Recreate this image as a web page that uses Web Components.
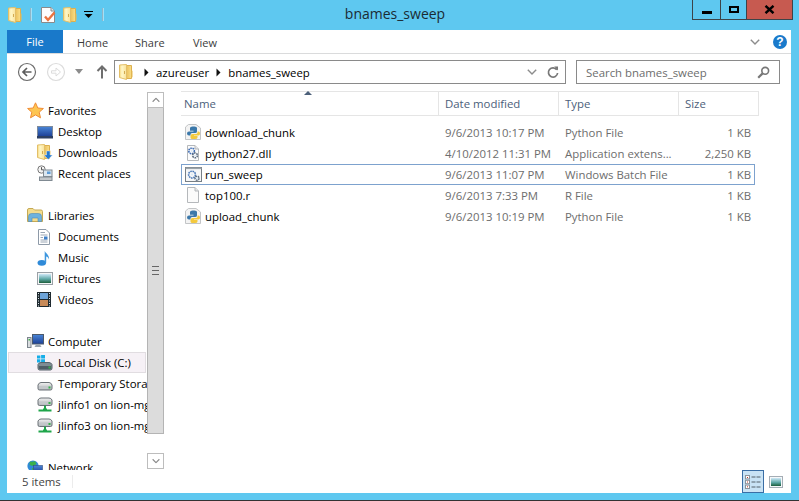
<!DOCTYPE html>
<html><head><meta charset="utf-8"><title>bnames_sweep</title>
<style>html,body{margin:0;padding:0;height:100%;overflow:hidden}body{font:11.4px "Open Sans",sans-serif}</style>
</head><body>
<fx-window>
  <fx-titlebar slot="title">bnames_sweep</fx-titlebar>
  <fx-ribbon slot="ribbon"></fx-ribbon>
  <fx-address slot="address"></fx-address>
  <fx-nav slot="nav">
    <fx-navitem icon="star" head>Favorites</fx-navitem>
    <fx-navitem icon="desktop">Desktop</fx-navitem>
    <fx-navitem icon="downloads">Downloads</fx-navitem>
    <fx-navitem icon="recent">Recent places</fx-navitem>
    <fx-navitem icon="libraries" head gap>Libraries</fx-navitem>
    <fx-navitem icon="documents">Documents</fx-navitem>
    <fx-navitem icon="music">Music</fx-navitem>
    <fx-navitem icon="pictures">Pictures</fx-navitem>
    <fx-navitem icon="videos">Videos</fx-navitem>
    <fx-navitem icon="computer" head gap>Computer</fx-navitem>
    <fx-navitem icon="localdisk" selected>Local Disk (C:)</fx-navitem>
    <fx-navitem icon="disk">Temporary Storage (D:)</fx-navitem>
    <fx-navitem icon="netdrive">jlinfo1 on lion-mgmt</fx-navitem>
    <fx-navitem icon="netdrive">jlinfo3 on lion-mgmt</fx-navitem>
    <fx-navitem icon="network" head gap>Network</fx-navitem>
  </fx-nav>
  <fx-filelist slot="files">
    <fx-filerow icon="python" date="9/6/2013 10:17 PM" type="Python File" size="1 KB">download_chunk</fx-filerow>
    <fx-filerow icon="dll" date="4/10/2012 11:31 PM" type="Application extens..." size="2,250 KB">python27.dll</fx-filerow>
    <fx-filerow icon="batch" date="9/6/2013 11:07 PM" type="Windows Batch File" size="1 KB" selected>run_sweep</fx-filerow>
    <fx-filerow icon="blank" date="9/6/2013 7:33 PM" type="R File" size="1 KB">top100.r</fx-filerow>
    <fx-filerow icon="python" date="9/6/2013 10:19 PM" type="Python File" size="1 KB">upload_chunk</fx-filerow>
  </fx-filelist>
  <fx-status slot="status">5 items</fx-status>
</fx-window>
<script>
const defs=`<defs>
<linearGradient id="fa" x1="0" x2="1"><stop offset="0" stop-color="#f6d77e"/><stop offset=".35" stop-color="#fff7c8"/><stop offset="1" stop-color="#f9e29a"/></linearGradient>
<linearGradient id="fb" x1="0" x2="1"><stop offset="0" stop-color="#e9bd58"/><stop offset="1" stop-color="#fbe08a"/></linearGradient>
<linearGradient id="scr" x1="0" y1="0" x2="0" y2="1"><stop offset="0" stop-color="#4a86d8"/><stop offset="1" stop-color="#1c3f95"/></linearGradient>
<linearGradient id="sky" x1="0" y1="0" x2="0" y2="1"><stop offset="0" stop-color="#cfe8f7"/><stop offset=".55" stop-color="#5fa9a8"/><stop offset="1" stop-color="#1d5f3c"/></linearGradient>
<linearGradient id="dsk" x1="0" y1="0" x2="0" y2="1"><stop offset="0" stop-color="#f2f2f2"/><stop offset="1" stop-color="#a9aeb2"/></linearGradient>
</defs>`;
const folder=`<path d="M7 1.5 H12.5 V14.5 H7 Z" fill="url(#fb)" stroke="#dcb04f"/><path d="M.5 1 L7.5 .5 V15.5 L.5 13.5 Z" fill="url(#fa)" stroke="#e3bf68"/><path d="M12.5 6 L13.5 7 V13 L12.5 14 Z" fill="#e7bb55"/><rect x="5" y="7" width="1" height="3" fill="#d3ab52"/>`;
const gear=(x,y,c,r=2.6)=>`<circle cx="${x}" cy="${y}" r="${r}" fill="none" stroke="${c}" stroke-width="1.6" stroke-dasharray="1.6 .7"/><circle cx="${x}" cy="${y}" r="1" fill="#dbe9f6"/>`;
const page=`<path d="M2.5 .5 H10 L13.5 4 V15.5 H2.5 Z" fill="#fbfbfb" stroke="#b5b8bb"/><path d="M10 .5 V4 H13.5" fill="#e5e6e8" stroke="#b5b8bb"/>`;
const drive=`<path d="M1 9 Q2 6.5 4 6.5 H12 Q14 6.5 15 9 V12.5 Q15 14 13.5 14 H2.5 Q1 14 1 12.5 Z" fill="url(#dsk)" stroke="#6c7378"/><rect x="2" y="10" width="12" height="3" fill="#c3c7ca"/><rect x="11.5" y="10.5" width="2" height="2" fill="#37b24a"/>`;
const icons={
 folder:[14,16,folder],
 qatdoc:[15,16,`<path d="M.5 .5 H10 L13.5 4 V15.5 H.5 Z" fill="#fdfdfd" stroke="#8a8a8a"/><path d="M10 .5 V4 H13.5" fill="#e3e3e3" stroke="#8a8a8a"/><path d="M4 9.5 L7 13 L13.5 5.5" fill="none" stroke="#ea7440" stroke-width="2.4"/>`],
 qatmenu:[9,7,`<rect x="0" y="0" width="9" height="1" fill="#000"/><path d="M0.5 3 H8.5 L4.5 7 Z" fill="#000"/>`],
 back:[20,20,`<circle cx="10" cy="10" r="8.5" fill="#fff" stroke="#6d6d6d" stroke-width="1.2"/><path d="M14.5 10 H6.5 M10 6 L6 10 L10 14" fill="none" stroke="#5d5d5d" stroke-width="1.7"/>`],
 fwd:[20,20,`<circle cx="10" cy="10" r="8.5" fill="#fff" stroke="#dcdcdc" stroke-width="1.2"/><path d="M5.5 8.8 H10 V6 L14.5 10 L10 14 V11.2 H5.5 Z" fill="none" stroke="#dcdcdc"/>`],
 down:[8,5,`<path d="M0 0 H8 L4 5 Z" fill="#8c8c8c"/>`],
 up:[12,14,`<path d="M6 1 V13.5 M1.5 6 L6 1.5 L10.5 6" fill="none" stroke="#6e6e6e" stroke-width="2"/>`],
 crumb:[5,9,`<path d="M0.5 0.5 L4.5 4.5 L.5 8.5 Z" fill="#111"/>`],
 chev:[10,6,`<path d="M.8 .8 L5 5 L9.2 .8" fill="none" stroke="#8c8c8c" stroke-width="1.4"/>`],
 refresh:[12,13,`<path d="M9.8 3.8 A4.6 4.6 0 1 0 10.6 7" fill="none" stroke="#777" stroke-width="1.7"/><path d="M7.2 .4 H11 V4.6 Z" fill="#777"/>`],
 search:[13,13,`<circle cx="8.2" cy="4.8" r="3.4" fill="none" stroke="#777" stroke-width="1.6"/><path d="M5.6 7.4 L1.2 11.8" stroke="#777" stroke-width="2.2"/>`],
 close:[11,9,`<path d="M1.5 .8 L9.5 8.2 M9.5 .8 L1.5 8.2" stroke="#000" stroke-width="2.4"/>`],
 star:[17,17,`<path d="M8.5 .8 L10.8 6 L16.4 6.5 L12.2 10.2 L13.5 15.8 L8.5 12.9 L3.5 15.8 L4.8 10.2 L.6 6.5 L6.2 6 Z" fill="#fdc552" stroke="#f08c35"/>`],
 desktop:[16,14,`<rect x=".5" y="1.5" width="15" height="10" fill="url(#scr)" stroke="#7d8a9c"/><rect x="0" y="11" width="16" height="2.5" fill="#2c3f63"/>`],
 downloads:[16,17,`<g>${folder}</g><path d="M9.5 7 H13 V11 H15.5 L11.2 15.5 L7 11 H9.5 Z" fill="#2378d0" stroke="#fff" stroke-width=".4"/>`],
 recent:[16,17,`<circle cx="4.5" cy="4.5" r="3.7" fill="#f4f4f4" stroke="#777"/><path d="M4.5 2.2 V4.8 H6.6" fill="none" stroke="#555"/><rect x="6.5" y="5" width="8.5" height="6.5" fill="#dbe6ef" stroke="#808a92"/><rect x="10" y="6.5" width="3.5" height="2.5" fill="#5c9bd6"/><rect x="2.5" y="12" width="12.5" height="3.5" fill="#c3c7ca" stroke="#808a92"/>`],
 libraries:[16,15,`<path d="M.5 2 Q.5 .5 2 .5 H6 L7.5 2 H14 Q15.5 2 15.5 3.5 V13.5 H.5 Z" fill="#f3dc8e" stroke="#c5a954"/><path d="M1.5 13.5 V8.5 Q1.5 5.5 4.5 5.5 H11.5 Q14.5 5.5 14.5 8.5 V13.5 H11 V10 H5 V13.5 Z" fill="#6eb2de" stroke="#4f8cb8" stroke-width=".6"/>`],
 documents:[14,16,`<path d="M1.5 .5 H9 L12.5 4 V15.5 H1.5 Z" fill="#fff" stroke="#8e9aa8"/><path d="M3.5 3.5 H8 M3.5 6 H10.5 M3.5 8.5 H6 M3.5 11 H10.5 M3.5 13 H10.5" stroke="#9aa6b4"/><rect x="7" y="7.5" width="3.5" height="3" fill="#3d7fc8"/>`],
 music:[14,16,`<ellipse cx="4.8" cy="12.8" rx="4.3" ry="2.9" fill="#2f8ad8"/><path d="M7.7 12.5 V1 C8.8 3.5 12.5 5 12 9.5 C11.5 7.5 10 6.5 9.2 6.5 V12.5 Z" fill="#3d97df"/>`],
 pictures:[16,13,`<rect x=".5" y=".5" width="15" height="12" fill="#f3f5f6" stroke="#9aa0a6"/><rect x="2" y="2" width="12" height="9" fill="url(#sky)"/>`],
 videos:[15,15,`<rect x="0" y="0" width="14" height="15" fill="#1f2a30"/><rect x="3" y="1" width="8" height="6" fill="#6ea4d8"/><rect x="3" y="8" width="8" height="6" fill="#c88a58"/><path d="M1 1.5 H2 M1 4 H2 M1 6.5 H2 M1 9 H2 M1 11.5 H2 M1 14 H2 M12 1.5 H13 M12 4 H13 M12 6.5 H13 M12 9 H13 M12 11.5 H13 M12 14 H13" stroke="#dfe6ea"/>`],
 computer:[17,15,`<rect x="5.5" y=".5" width="11" height="9.5" fill="url(#scr)" stroke="#4c5a6c"/><path d="M9 10.5 H13 L14.5 13 H7.5 Z" fill="#9aa4ae"/><rect x=".5" y="3.5" width="3.5" height="10" fill="#d9dcdf" stroke="#7c858d"/><rect x="1.5" y="5" width="1.5" height="1.5" fill="#42b24a"/>`],
 localdisk:[16,16,`<path d="M0 .5 H3.4 V3.6 H0 Z M4.1 0 H8 V3.6 H4.1 Z M0 4.3 H3.4 V7.4 H0 Z M4.1 4.3 H8 V8 H4.1 Z" fill="#16aee8"/><path d="M1 9.5 Q2 7.5 4 7.5 H12 Q14 7.5 15 9.5 V13 Q15 15 13.5 15 H2.5 Q1 15 1 13 Z" fill="#7f8d93" stroke="#56636a"/><rect x="2" y="11" width="12" height="3" fill="#4f5e66"/><rect x="11.5" y="11.5" width="2" height="2" fill="#37b24a"/>`],
 disk:[16,16,drive],
 netdrive:[16,16,`<path d="M1 3 Q2 1 4 1 H12 Q14 1 15 3 V7 Q15 8.5 13.5 8.5 H2.5 Q1 8.5 1 7 Z" fill="url(#dsk)" stroke="#6c7378"/><rect x="2" y="4.5" width="12" height="3" fill="#c3c7ca"/><rect x="11.5" y="5" width="2" height="2" fill="#37b24a"/><path d="M8 8.5 V12 M1.5 13.5 H14.5 M6 12.5 H10" stroke="#1fa54a" stroke-width="2"/>`],
 network:[17,17,`<circle cx="6" cy="7" r="5.6" fill="#2f8ad8"/><path d="M3 2.5 Q6 3 8 2 L9.5 5 L6 7 L2.5 6 Z M5 9 L8 9 L7 12 L5.5 12 Z" fill="#3bb14a"/><rect x="6.5" y="6.5" width="9" height="7" fill="url(#scr)" stroke="#334f80" stroke-width=".6"/>`],
 python:[17,17,`<path d="M3.5 .5 H11 L15.5 4 V15.5 H.5 V3 Z" fill="#f3f3f3" stroke="#c3c5c7"/><path d="M5 7.5 V4 Q5 2.5 7.5 2.5 H9.5 Q12 2.5 12 4 V7.5 Q12 9 10 9 H7 Q5.5 9 5.5 10.5 V11.5 H4 Q2 11.5 2 9.5 Q2 7.5 4 7.5 H8.5 V6.8 H5 Z" fill="#3b78aa"/><path d="M12.5 7.5 H13.5 Q15 7.5 15 9.5 Q15 11.5 13.5 11.5 H9 V12 H12.5 V13.5 Q12.5 15 10 15 H7.5 Q5.5 15 5.5 13.5 V12 Q5.5 10 7.5 10 H10.5 Q12.5 10 12.5 8.5 Z" fill="#f4c93d"/>`],
 dll:[16,17,`${page}${gear(6.6,6,'#3f6db5',2.8)}${gear(10,10.4,'#5f6f82',2.4)}`],
 batch:[17,15,`<rect x=".5" y=".5" width="16" height="14" fill="#f6f7f8" stroke="#777f86"/><rect x=".5" y=".5" width="16" height="1.6" fill="#9aa3aa"/>${gear(7,7.6,'#4a78b8',3.4)}${gear(12,11.2,'#5f6f82',2)}`],
 blank:[16,17,page],
 detailsview:[16,14,`<rect x=".5" y=".5" width="4" height="3.4" fill="#fff" stroke="#8a939b"/><rect x=".5" y="5.3" width="4" height="3.4" fill="#fff" stroke="#8a939b"/><rect x=".5" y="10.1" width="4" height="3.4" fill="#fff" stroke="#8a939b"/><rect x="2" y="2" width="1" height="1" fill="#c0392b"/><rect x="2" y="6.5" width="1" height="1" fill="#c0392b"/><rect x="2" y="11.3" width="1" height="1" fill="#c0392b"/><path d="M6.5 2 H15.5 M6.5 7 H15.5 M6.5 12 H15.5" stroke="#55606a" stroke-dasharray="4 1"/>`],
 largeview:[14,12,`<rect x=".5" y=".5" width="13" height="11" fill="#f6f8f9" stroke="#a5adb5"/><rect x="2" y="2" width="10" height="8" fill="url(#sky)"/>`]
};
class El extends HTMLElement{
  constructor(){super();this.attachShadow({mode:'open'});this.shadowRoot.innerHTML=this.constructor.html(this);}
}
class FxIcon extends HTMLElement{
  constructor(){super();this.attachShadow({mode:'open'});}
  connectedCallback(){const [w,h,b]=icons[this.getAttribute('name')];
    this.shadowRoot.innerHTML=`<style>:host{display:inline-flex;flex:none}svg{display:block}</style><svg width="${w}" height="${h}" viewBox="0 0 ${w} ${h}">${defs}${b}</svg>`;}
}
customElements.define('fx-icon',FxIcon);
customElements.define('fx-window',class extends El{static html(){return `<style>
:host{display:flex;flex-direction:column;width:799px;height:501px;box-sizing:border-box;background:#5ec8f0;border-bottom:1px solid #333;font:11.4px "Open Sans",sans-serif;color:#000}
.client{flex:1;min-height:0;margin:0 8px 7px 7px;background:#fff;display:flex;flex-direction:column}
.body{flex:1;min-height:0;display:flex}
</style><slot name="title"></slot><div class="client"><slot name="ribbon"></slot><slot name="address"></slot><div class="body"><slot name="nav"></slot><slot name="files"></slot></div><slot name="status"></slot></div>`}});
customElements.define('fx-titlebar',class extends El{static html(){return `<style>
:host{display:flex;height:30px;flex:none;align-items:flex-start}
.qat{display:flex;align-items:center;height:15px;margin-top:7px;width:97px;padding-left:8px;box-sizing:content-box}
.qat fx-icon:nth-child(1){margin-right:8px}
.sep{width:1px;height:13px;background:#8fb6c8;box-shadow:1px 0 #a4e0f6;flex:none}
.title{flex:1;text-align:center;font-size:14px;line-height:20px;margin-top:4px;color:#1b2b33;padding-right:7px}
.cap{display:flex;height:20px;width:101px;margin-right:6px;box-sizing:border-box;border:1px solid #3c4449;border-top:0;flex:none}
.cap div{display:flex;align-items:center;justify-content:center}
.min{width:28px;box-sizing:border-box;border-right:1px solid #3c4449}
.max{width:26px;box-sizing:border-box;border-right:1px solid #3c4449}
.close{flex:1;background:#c75a50}
.min i{display:block;width:10px;height:3px;background:#000;margin-top:5px}
.max i{display:block;width:6px;height:3px;border:2px solid #000;margin-bottom:1px}
</style>
<div class="qat"><fx-icon name="folder"></fx-icon><span class="sep"></span><fx-icon name="qatdoc" style="margin-left:10px"></fx-icon><fx-icon name="folder" style="margin-left:7px"></fx-icon><fx-icon name="qatmenu" style="margin-left:7px"></fx-icon><span class="sep" style="margin-left:9px"></span></div>
<div class="title"><slot></slot></div>
<div class="cap"><div class="min"><i></i></div><div class="max"><i></i></div><div class="close"><fx-icon name="close"></fx-icon></div></div>`}});
customElements.define('fx-ribbon',class extends El{static html(){return `<style>
:host{display:flex;height:24px;flex:none;box-sizing:border-box;border-bottom:1px solid #dadbdc;align-items:stretch;font-size:11px;color:#3c3c3c}
.file{width:56px;height:23px;background:#1979ca;color:#fff;display:flex;align-items:center;justify-content:center}
.tab{margin-left:14px;width:44px;line-height:26px}
.r{margin-left:auto;display:flex;align-items:center;gap:13px;padding-right:4px}
.help{width:14px;height:14px;border-radius:50%;background:#1a7acb;color:#fff;font:bold 12px/14px "Liberation Sans",sans-serif;text-align:center}
</style><div class="file">File</div><div class="tab">Home</div><div class="tab">Share</div><div class="tab">View</div>
<div class="r"><fx-icon name="chev"></fx-icon><div class="help">?</div></div>`}});
customElements.define('fx-address',class extends El{static html(){return `<style>
:host{display:flex;height:37px;flex:none;box-sizing:border-box;padding-top:6px;align-items:flex-start;color:#000}
.nav{display:flex;align-items:center;height:23px;padding-left:10px;width:107px;box-sizing:border-box;flex:none}
.box{box-sizing:border-box;height:24px;border:1px solid #8a8a8a;display:flex;align-items:center;background:#fff}
.addr{width:452px;padding-left:4px;flex:none}
.addr span{margin:0 0 0 7px}
.addr fx-icon[name=crumb]{margin-left:11px}
.addr span+fx-icon[name=crumb]{margin-left:7px}
.search{width:204px;margin-left:10px;padding:0 9px;color:#6d6d6d;justify-content:space-between;flex:none}
</style>
<div class="nav"><fx-icon name="back"></fx-icon><fx-icon name="fwd" style="margin-left:9px"></fx-icon><fx-icon name="down" style="margin-left:9px"></fx-icon><fx-icon name="up" style="margin-left:13px"></fx-icon></div>
<div class="box addr"><fx-icon name="folder"></fx-icon><fx-icon name="crumb"></fx-icon><span>azureuser</span><fx-icon name="crumb"></fx-icon><span>bnames_sweep</span>
<fx-icon name="chev" style="margin-left:auto"></fx-icon><fx-icon name="refresh" style="margin:0 6px 0 10px"></fx-icon></div>
<div class="box search"><span>Search bnames_sweep</span><fx-icon name="search"></fx-icon></div>`}});
customElements.define('fx-nav',class extends El{static html(){return `<style>
:host{display:flex;width:157px;flex:none;min-height:0;box-sizing:border-box;padding-top:1px}
.list{width:140px;flex:none;overflow:hidden;padding-top:8px;box-sizing:border-box}
.sb{width:17px;flex:none;display:flex;flex-direction:column;box-sizing:border-box;background:#fff}
.btn{height:16px;flex:none;box-sizing:border-box;border:1px solid #bdbdbd;display:flex;align-items:center;justify-content:center;background:#fff}
.thumb{height:326px;flex:none;box-sizing:border-box;background:#dcdcdc;border:1px solid #b4b4b4;border-top:0;display:flex;align-items:center;justify-content:center}
.thumb i{display:block;width:7px;height:7px;border-top:1px solid #666;border-bottom:1px solid #666;background:linear-gradient(#666,#666) 0 50%/100% 1px no-repeat}
.sp{flex:1}
</style><div class="list"><slot></slot></div>
<div class="sb"><div class="btn"><fx-icon name="chev" style="transform:rotate(180deg) scale(.8)"></fx-icon></div><div class="thumb"><i></i></div><div class="sp"></div><div class="btn" style="margin-bottom:1px"><fx-icon name="chev" style="transform:scale(.8)"></fx-icon></div></div>`}});
customElements.define('fx-navitem',class extends El{static html(h){const head=h.hasAttribute('head');return `<style>
:host{display:block;height:21px;box-sizing:border-box;white-space:nowrap}
:host([gap]){margin-top:21px}
:host([selected]) .row{background:#f6f1f6;border:1px solid #e1dde1;margin-left:1px;margin-right:1px;padding-left:28px}
.row{height:21px;box-sizing:border-box;display:flex;align-items:center;padding-left:${head?20:30}px;color:#000}
.ic{width:21px;flex:none;display:flex;justify-content:flex-start}
</style><div class="row"><span class="ic"><fx-icon name="${h.getAttribute('icon')}"></fx-icon></span><slot></slot></div>`}});
customElements.define('fx-filelist',class extends El{static html(){return `<style>
:host{display:block;flex:1;min-width:0;padding-left:17px;color:#4c607a;position:relative}
.hd{display:grid;grid-template-columns:258px 120px 120px 80px;height:25px;box-sizing:border-box;border-top:1px solid #e5e5e5;border-bottom:1px solid #e5e5e5;width:578px}
.hd div{padding-left:3px;line-height:23px;border-right:1px solid #e5e5e5}
.hd div+div{padding-left:6px}
.arrow{position:absolute;left:140px;top:0;width:0;height:0;border:4px solid transparent;border-top:0;border-bottom:4px solid #4c607a}
.rows{padding-top:6px}
</style><span class="arrow"></span><div class="hd"><div>Name</div><div>Date modified</div><div>Type</div><div>Size</div></div><div class="rows"><slot></slot></div>`}});
customElements.define('fx-filerow',class extends El{static html(h){const a=k=>h.getAttribute(k);return `<style>
:host{display:grid;grid-template-columns:258px 120px 120px 76px;width:574px;height:21px;box-sizing:border-box;align-items:center;color:#6d6d6d;white-space:nowrap}
:host([selected]){outline:1px solid #7da2ce;outline-offset:-1px}
.n{display:flex;align-items:center;color:#000;padding-left:4px}
.n span{width:20px;flex:none;display:flex}
.d,.t{padding-left:6px}
.s{text-align:right;padding-right:4px}
</style><div class="n"><span><fx-icon name="${a('icon')}"></fx-icon></span><slot></slot></div><div class="d">${a('date')}</div><div class="t">${a('type')}</div><div class="s">${a('size')}</div>`}});
customElements.define('fx-status',class extends El{static html(){return `<style>
:host{display:flex;height:23px;flex:none;align-items:center;padding-left:15px;color:#444}
.sep{width:1px;height:13px;background:#ececec;margin-left:11px}
.r{margin-left:auto;display:flex;align-items:center;height:23px;margin-right:8px}
.on{width:22px;height:23px;box-sizing:border-box;border:1px solid #3a6ea5;background:#c9e3f5;display:flex;align-items:center;justify-content:center}
</style><slot></slot><span class="sep"></span><div class="r"><div class="on"><fx-icon name="detailsview"></fx-icon></div><fx-icon name="largeview" style="margin-left:5px"></fx-icon></div>`}});
</script>
</body></html>
